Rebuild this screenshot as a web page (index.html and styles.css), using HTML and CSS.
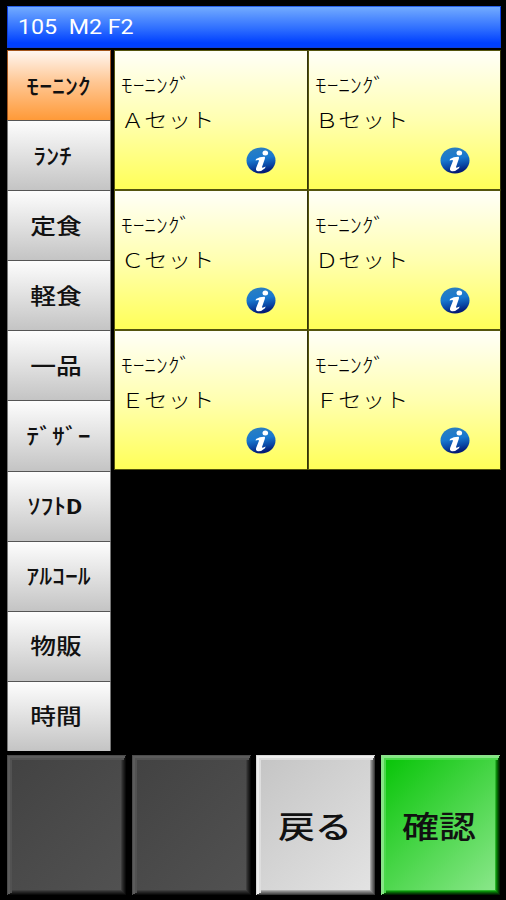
FILE: index.html
```html
<!DOCTYPE html>
<html lang="ja">
<head>
    <meta charset="UTF-8">
    <meta name="viewport" content="width=device-width, initial-scale=1.0">
    <title>注文</title>
    <link rel="stylesheet" href="styles.css">
</head>
<body>
    <!-- info icon, shared by all menu items -->
    <svg width="0" height="0" class="defs">
        <defs>
            <linearGradient id="infoBg" x1="0" y1="0" x2="0.2" y2="1">
                <stop offset="0" stop-color="#2f80bc"/>
                <stop offset="0.5" stop-color="#1878d0"/>
                <stop offset="0.8" stop-color="#0a46a4"/>
                <stop offset="1" stop-color="#031c78"/>
            </linearGradient>
            <symbol id="info" viewBox="0 0 30 27">
                <ellipse cx="15" cy="13.5" rx="14.5" ry="13" fill="url(#infoBg)"/>
                <ellipse cx="19.3" cy="6" rx="2.8" ry="2.5" fill="#fff"/>
                <path d="M10 12 Q14 9.6 18.6 9.8 Q19.4 10.4 18.8 12 L16 20 Q16 21.6 19.6 19.6 L19 21.2 Q15.4 24.6 11.8 24.2 Q9.2 23.6 10.2 20.8 L13 13.8 Q13 12.4 9.6 13.6 Z" fill="#fff"/>
            </symbol>
        </defs>
    </svg>

    <div class="terminal">
        <header class="header"><span>105&nbsp; M2 F2</span></header>

        <div class="main">
            <nav class="categories">
                <button class="category active"><span>ﾓｰﾆﾝｸ</span></button>
                <button class="category kana"><span>ﾗﾝﾁ&nbsp;&nbsp;</span></button>
                <button class="category kanji"><span>定食</span></button>
                <button class="category kanji"><span>軽食</span></button>
                <button class="category kanji"><span>一品</span></button>
                <button class="category"><span>ﾃﾞｻﾞｰ</span></button>
                <button class="category kana"><span>ｿﾌﾄ<b>D</b>&nbsp;</span></button>
                <button class="category"><span>ｱﾙｺｰﾙ</span></button>
                <button class="category kanji"><span>物販</span></button>
                <button class="category kanji"><span>時間</span></button>
            </nav>

            <div class="items">
                <div class="item">
                    <p class="name">ﾓｰﾆﾝｸﾞ<br>Ａセット</p>
                    <svg class="info"><use href="#info"/></svg>
                </div>
                <div class="item">
                    <p class="name">ﾓｰﾆﾝｸﾞ<br>Ｂセット</p>
                    <svg class="info"><use href="#info"/></svg>
                </div>
                <div class="item">
                    <p class="name">ﾓｰﾆﾝｸﾞ<br>Ｃセット</p>
                    <svg class="info"><use href="#info"/></svg>
                </div>
                <div class="item">
                    <p class="name">ﾓｰﾆﾝｸﾞ<br>Ｄセット</p>
                    <svg class="info"><use href="#info"/></svg>
                </div>
                <div class="item">
                    <p class="name">ﾓｰﾆﾝｸﾞ<br>Ｅセット</p>
                    <svg class="info"><use href="#info"/></svg>
                </div>
                <div class="item">
                    <p class="name">ﾓｰﾆﾝｸﾞ<br>Ｆセット</p>
                    <svg class="info"><use href="#info"/></svg>
                </div>
            </div>
        </div>

        <footer class="actions">
            <button class="action empty" disabled></button>
            <button class="action empty" disabled></button>
            <button class="action back"><span>戻る</span></button>
            <button class="action confirm"><span>確認</span></button>
        </footer>
    </div>
</body>
</html>
```
FILE: styles.css
```css
* {
    box-sizing: border-box;
}
body {
    margin: 0;
    background: #000;
    font-family: "Noto Sans CJK JP", sans-serif;
}
button {
    margin: 0;
    padding: 0;
    font-family: inherit;
    color: #111;
    cursor: pointer;
}
.defs {
    display: block;
}
.terminal {
    display: flex;
    flex-direction: column;
    width: 506px;
    height: 900px;
    padding: 6px 5px 4px 7px;
}

/* header */
.header {
    display: flex;
    align-items: center;
    height: 42px;
    padding-left: 10px;
    border: 1px solid #0c3fe0;
    border-top-color: #2660e8;
    background: linear-gradient(#72abff, #2d6dff 55%, #0040ff 90%);
    color: #fff;
    font-family: Roboto, sans-serif;
    font-size: 20px;
}
.header span {
    transform: scaleX(1.16);
    transform-origin: left;
}

/* category list and menu items */
.main {
    display: flex;
    gap: 3px;
    height: 701px;
    margin-top: 2px;
}
.categories {
    display: grid;
    grid-template-rows: repeat(10, 1fr);
    width: 105px;
}
.category {
    display: flex;
    align-items: center;
    justify-content: center;
    padding-bottom: 4px;
    border: 1px solid #777;
    border-top-color: #555;
    border-bottom: none;
    background: linear-gradient(#fdfdfd, #c4c4c4);
    font-size: 22px;
    font-weight: 500;
    line-height: 30px;
}
.category.kana {
    padding-right: 2px;
}
.category.kanji {
    padding-right: 6px;
}
.category.active {
    border-color: #a5551c;
    background: linear-gradient(#fff6f0, #ffc794 45%, #ff9a38);
}
.category span {
    white-space: nowrap;
    transform: scaleX(1.17);
}
.category b {
    font-family: Roboto, sans-serif;
    font-size: 21px;
    line-height: 1;
}
.items {
    display: grid;
    grid-template-columns: 194px 193px;
    grid-template-rows: repeat(3, 140px);
    flex: 1;
}
.item {
    display: flex;
    flex-direction: column;
    border: 1px solid #55550f;
    border-right-color: #33330a;
    background: linear-gradient(#fffff8, #ffffb0 50%, #ffff58);
    padding: 16px 0 0 6px;
}
.name {
    margin: 0;
    height: 80px;
    font-size: 20.5px;
    font-weight: 300;
    line-height: 35px;
    color: #000;
    white-space: nowrap;
    transform: scaleX(1.14);
    transform-origin: left;
}
.info {
    width: 30px;
    height: 27px;
    margin-left: 125px;
}

/* bottom buttons */
.actions {
    display: grid;
    grid-template-columns: repeat(4, 120px);
    justify-content: space-between;
    height: 141px;
    margin-top: 4px;
}
.action {
    display: flex;
    align-items: center;
    justify-content: center;
    padding: 0 3px 3px 0;
    border: none;
    font-size: 31px;
    font-weight: 500;
    /* soft bevel: light top left, fading to black bottom right */
    box-shadow:
        inset -1px -1px #000,
        inset 1px 1px var(--light1),
        inset -2px -2px var(--dark1),
        inset 3px 3px var(--light2),
        inset -3px -3px var(--dark2),
        inset 5px 5px var(--light3),
        inset -4px -4px var(--dark3),
        inset -5px -5px var(--dark4),
        inset -6px -6px var(--dark5);
}
.action span {
    transform: scaleX(1.19);
}
.empty {
    --light1: #4c4c4c;
    --light2: #5c5c5c;
    --light3: #525252;
    --dark1: #0a0a0a;
    --dark2: #161616;
    --dark3: #222;
    --dark4: #2e2e2e;
    --dark5: #3e3e3e;
    background: linear-gradient(135deg, #424242, #525252);
}
.back {
    --light1: #d8d8d8;
    --light2: #efefef;
    --light3: #dedede;
    --dark1: #3a3a3a;
    --dark2: #585858;
    --dark3: #707070;
    --dark4: #8a8a8a;
    --dark5: #ababab;
    background: linear-gradient(135deg, #c4c4c4, #e4e4e4);
}
.confirm {
    --light1: #8ce08c;
    --light2: #84e884;
    --light3: #4cd84c;
    --dark1: #022002;
    --dark2: #044004;
    --dark3: #066406;
    --dark4: #0a8a0a;
    --dark5: #2cb42c;
    background: linear-gradient(135deg, #04c404, #90e890);
}
```
